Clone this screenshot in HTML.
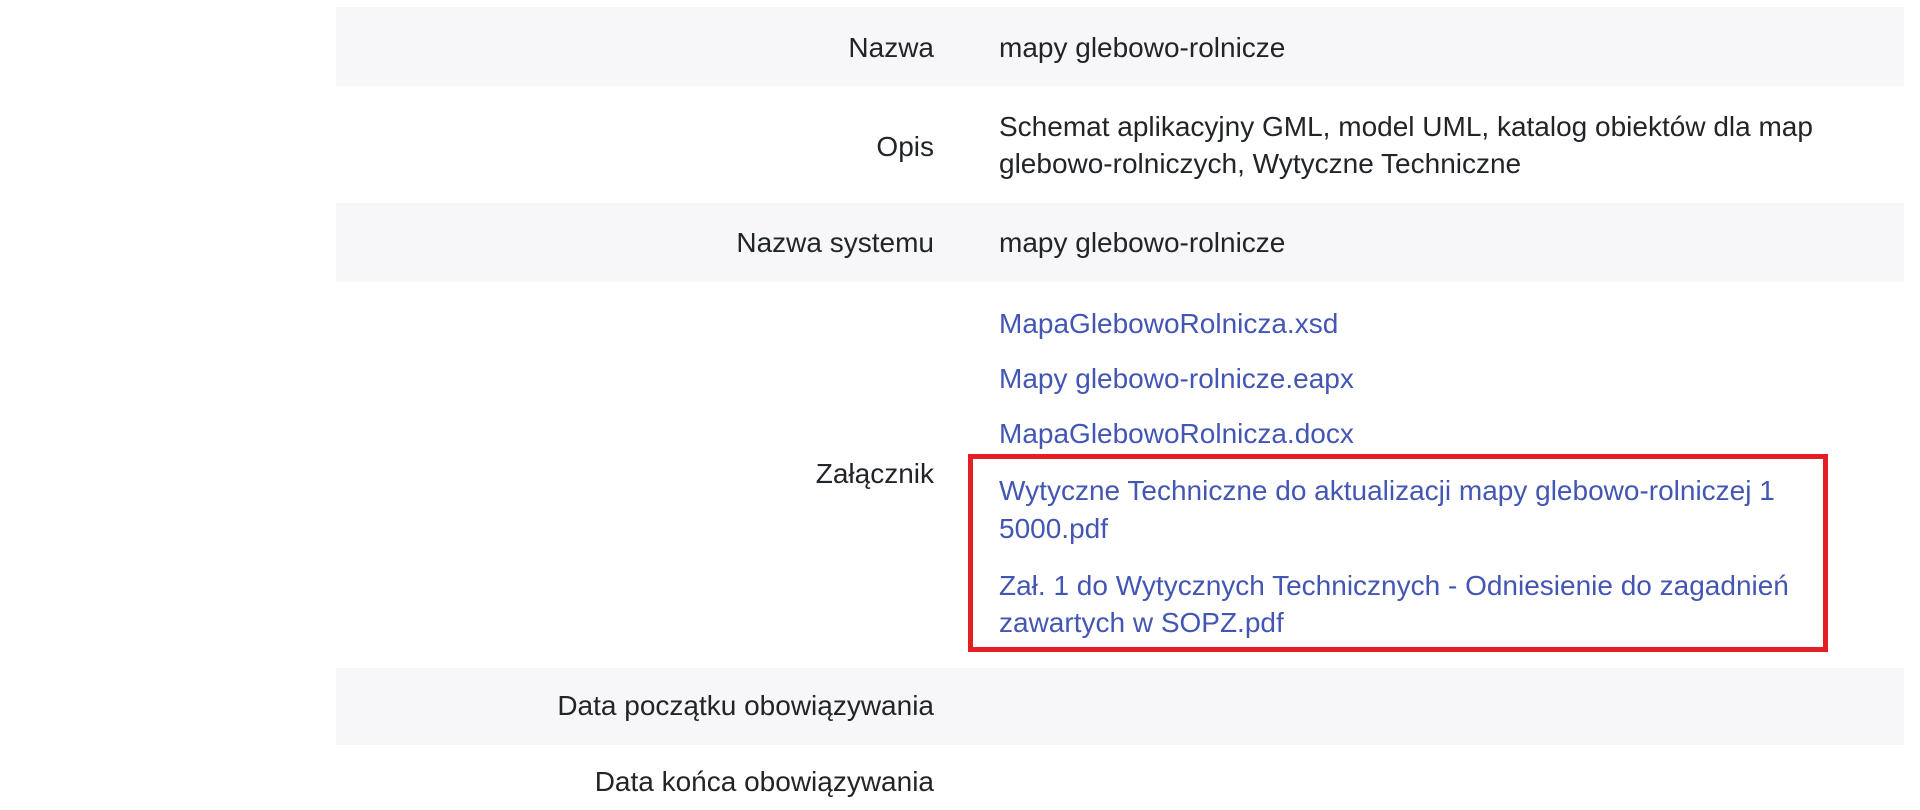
<!DOCTYPE html>
<html><head><meta charset="utf-8"><style>
body{margin:0;width:1920px;height:810px;background:#fff;overflow:hidden;position:relative;font-family:"Liberation Sans",Arial,sans-serif;font-size:28px;color:#212529}
.g{position:absolute;left:336px;width:1568px;background:#f7f7f9}
.t{position:absolute;line-height:37px;white-space:nowrap}
.l{right:986px;text-align:right}
.v{left:999px}
.a{color:#4356b4}
.box{position:absolute;left:968px;top:454px;width:860px;height:198px;border:5px solid #e31e24;box-sizing:border-box}
</style></head><body>
<div class="g" style="top:7px;height:79px"></div>
<div class="g" style="top:203px;height:79px"></div>
<div class="g" style="top:668px;height:77px"></div>
<div class="t l" style="top:29px">Nazwa</div>
<div class="t v" style="top:29px">mapy glebowo-rolnicze</div>
<div class="t l" style="top:128px">Opis</div>
<div class="t v" style="top:108px">Schemat aplikacyjny GML, model UML, katalog obiektów dla map</div>
<div class="t v" style="top:145px">glebowo-rolniczych, Wytyczne Techniczne</div>
<div class="t l" style="top:224px">Nazwa systemu</div>
<div class="t v" style="top:224px">mapy glebowo-rolnicze</div>
<div class="t l" style="top:455px">Załącznik</div>
<div class="t v a" style="top:305px">MapaGlebowoRolnicza.xsd</div>
<div class="t v a" style="top:360px">Mapy glebowo-rolnicze.eapx</div>
<div class="t v a" style="top:415px">MapaGlebowoRolnicza.docx</div>
<div class="t v a" style="top:472px">Wytyczne Techniczne do aktualizacji mapy glebowo-rolniczej 1</div>
<div class="t v a" style="top:510px">5000.pdf</div>
<div class="t v a" style="top:567px">Zał. 1 do Wytycznych Technicznych - Odniesienie do zagadnień</div>
<div class="t v a" style="top:604px">zawartych w SOPZ.pdf</div>
<div class="box"></div>
<div class="t l" style="top:687px">Data początku obowiązywania</div>
<div class="t l" style="top:763px">Data końca obowiązywania</div>
</body></html>
